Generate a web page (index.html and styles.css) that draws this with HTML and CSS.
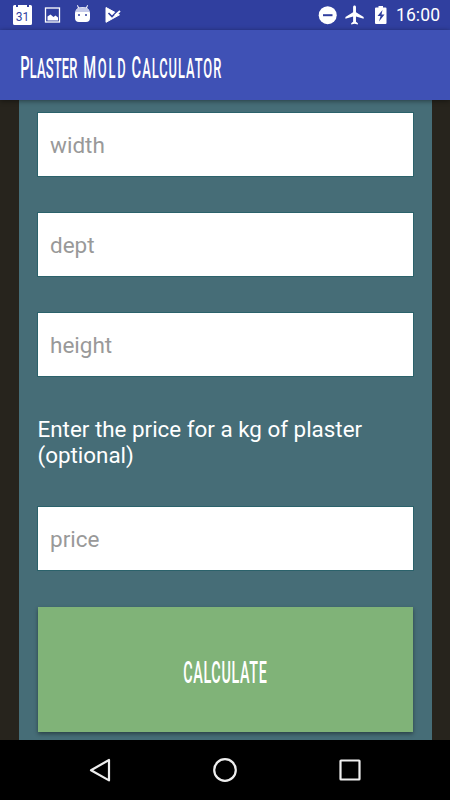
FILE: index.html
```html
<!DOCTYPE html>
<html lang="en">
<head>
<meta charset="utf-8">
<title>Plaster Mold Calculator</title>
<link rel="stylesheet" href="styles.css">
</head>
<body>
<div class="screen">
  <div class="status">
    <svg class="status-icons" width="130" height="30" viewBox="0 0 130 30">
      <path fill="#fff" d="M14.500 5H16v2h2V5h9v2h2V5h1.500q1.500 0 1.500 1.500v17q0 1.500-1.500 1.500h-16q-1.500 0-1.500-1.500v-17Q13 5 14.500 5z"/>
      <text class="date" x="22.500" y="20.800" text-anchor="middle">31</text>
      <rect x="45.500" y="8" width="14" height="14" fill="none" stroke="#fff" stroke-width="1.300"/>
      <path fill="#fff" d="M47.500 20.500v-4l3-2 3 2.500 2-1.500 2.500 2v3z"/>
      <path fill="#fff" d="M75 13q.3-3.500 3-5l-1-2.500.8-.4L79 7.500q3.500-1 7 0l1.200-2.400.8.4L87 8q2.700 1.500 3 5v5q0 4-4 4h-7q-4 0-4-4z"/>
      <path fill="#c5cae9" d="M75.500 12q.5-3.500 4-4.500h6q3.500 1 4 4.500z"/>
      <circle cx="79" cy="15" r="1" fill="#303f9f"/><circle cx="86" cy="15" r="1" fill="#303f9f"/>
      <path fill="#fff" stroke="#fff" stroke-linejoin="round" d="M106 7.500l13.500 7.300L106 22.300z"/>
      <path fill="none" stroke="#303f9f" stroke-width="1.700" d="M108.500 13l3.500 3.500 7-7"/>
      <path fill="none" stroke="#fff" stroke-width="1.800" d="M115 15.500l5-4.500"/>
    </svg>
    <svg width="72" height="30" viewBox="318 0 72 30">
      <circle cx="327.700" cy="15.200" r="9" fill="#fff"/><path stroke="#303f9f" stroke-width="2" d="M323 15.200h9.500"/>
      <path fill="#fff" transform="translate(343.500 3.500) scale(.96)" d="M21 16v-2l-8-5V3.500C13 2.670 12.330 2 11.500 2S10 2.670 10 3.500V9l-8 5v2l8-2.500V19l-2 1.500V22l3.500-1 3.500 1v-1.500L13 19v-5.500l8 2.500z"/>
      <path fill="#fff" d="M376 7.500h2.500V6h4.500v1.500h2.500q1 0 1 1V23q0 1-1 1H376q-1 0-1-1V8.500q0-1 1-1z"/>
      <path fill="#303f9f" d="M382.500 10l-5 6h3l-1.500 5.500 5.500-7h-3z"/>
    </svg>
    <span class="clock">16:00</span>
  </div>
  <header class="bar">
    <svg class="lettering" width="210" height="40" viewBox="20 46 210 40">
      <g transform="scale(.46 1)">
        <text x="44" y="78" textLength="124"><tspan class="initial">P</tspan>laster</text>
        <text x="181" y="78" textLength="92"><tspan class="initial">M</tspan>old</text>
        <text x="286" y="78" textLength="195"><tspan class="initial">C</tspan>alculator</text>
      </g>
    </svg>
  </header>
  <main class="content">
    <form class="panel">
      <input class="field" placeholder="width" aria-label="width">
      <input class="field" placeholder="dept" aria-label="dept">
      <input class="field" placeholder="height" aria-label="height">
      <p class="hint">Enter the price for a kg of plaster<br>(optional)</p>
      <input class="field" placeholder="price" aria-label="price">
      <button class="calc" type="button">
        <svg class="lettering" width="90" height="40" viewBox="0 0 90 40">
          <g transform="scale(.45 1)">
            <text class="initial" x="7" y="32" textLength="186">CALCULATE</text>
          </g>
        </svg>
      </button>
    </form>
  </main>
  <nav class="nav">
    <svg width="26" height="26" viewBox="0 0 26 26"><path d="M4 13.200L22 3v20.400z"/></svg>
    <svg width="26" height="26" viewBox="0 0 26 26"><circle cx="13" cy="13" r="10.800"/></svg>
    <svg width="26" height="26" viewBox="0 0 26 26"><rect x="3.500" y="3.500" width="19" height="19" rx=".5"/></svg>
  </nav>
</div>
</body>
</html>
```

FILE: styles.css
```css
* { box-sizing: border-box; }
body { margin: 0; font-family: Roboto, "Liberation Sans", sans-serif; }
svg { display: block; }
.screen { width: 450px; height: 800px; display: flex; flex-direction: column; overflow: hidden; background: #27241d; }
.status { height: 30px; flex: none; display: flex; align-items: center; background: #303f9f; color: #fff; }
.status-icons { margin-right: auto; }
.date { font-size: 12px; fill: #303f9f; }
.clock { width: 54px; margin-left: 6px; font-size: 17.5px; line-height: 30px; letter-spacing: .1px; }
.bar { height: 70px; flex: none; display: flex; align-items: center; padding: 2px 20px 0; background: #3f51b5; box-shadow: 0 1px 5px rgba(0, 0, 0, .45); z-index: 1; }
.bar .lettering { margin-top: -1px; }
.lettering { overflow: visible; }
.lettering text { font-family: Roboto, "Liberation Sans", sans-serif; font-size: 28px; font-weight: 500; fill: #fff; text-transform: uppercase; }
.lettering .initial { font-size: 32px; }
.content { flex: 1; min-height: 0; padding: 0 18.5px; }
.panel { height: 640px; padding: 13px 19px 0; background: #466d77; display: flex; flex-direction: column; }
.field { width: 100%; height: 63px; flex: none; margin: 0 0 37px; padding: 1px 12.5px 0; border: 0; border-radius: 0; outline: 1px solid #2b626b; outline-offset: 0; background: #fff; font: 22.5px Roboto, "Liberation Sans", sans-serif; }
.field::placeholder { color: #999; opacity: 1; }
.hint { margin: 3.4px 0 37.6px; height: 53px; color: #fff; font-size: 22.4px; line-height: 26px; white-space: nowrap; }
.calc { width: 100%; height: 125.5px; flex: none; display: flex; align-items: center; justify-content: center; border: 0; padding: 2px 0 0; background: #80b378; box-shadow: 0 2px 4px rgba(0, 0, 0, .4); }
.nav { height: 60px; flex: none; display: flex; align-items: center; justify-content: center; gap: 99px; background: #000; z-index: 1; }
.nav svg { fill: none; stroke: #eee; stroke-width: 2.2; stroke-linejoin: round; }
```
